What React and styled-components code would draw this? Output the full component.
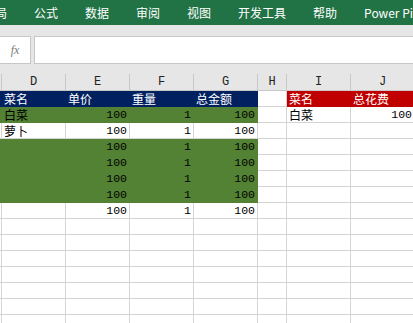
import React from "react";
import styled, { createGlobalStyle } from "styled-components";

const Global = createGlobalStyle`
  html, body { margin: 0; padding: 0; background: #ffffff; }
  body { width: 413px; height: 323px; overflow: hidden; font-family: "Noto Sans CJK SC", sans-serif; }
`;

const Page = styled.div`
  width: 413px;
  height: 323px;
  overflow: hidden;
  display: flex;
  flex-direction: column;
  background: #ffffff;
`;

const Ribbon = styled.div`
  height: 25px;
  flex: none;
  background: #217346;
  display: flex;
  align-items: center;
  gap: 27px;
  overflow: hidden;
  white-space: nowrap;
`;

const Tab = styled.span`
  color: #ffffff;
  font-family: "Noto Sans CJK SC", "Noto Sans", sans-serif;
  font-size: 12px;
  line-height: 25px;
  margin-left: ${(p) => (p.$first ? "-17px" : "0")};
  flex: none;
`;

const FormulaArea = styled.div`
  flex: none;
  background: #e6e6e6;
  padding: 11px 0 10px 0;
  display: flex;
  gap: 3px;
`;

const FxBox = styled.div`
  width: 31px;
  height: 28px;
  box-sizing: border-box;
  background: #ffffff;
  border: 1px solid #c6c6c6;
  border-left: none;
  display: flex;
  align-items: center;
  justify-content: center;
  font-family: "Liberation Serif", serif;
  font-style: italic;
  font-size: 12px;
  color: #7a7a7a;
`;

const InputBox = styled.div`
  flex: 1;
  height: 28px;
  box-sizing: border-box;
  background: #ffffff;
  border: 1px solid #c6c6c6;
  border-right: none;
`;

const ColumnsTemplate = "2px 64px 64px 64px 64px 29px 64px 64px";

const HeaderRow = styled.div`
  flex: none;
  display: grid;
  grid-template-columns: ${ColumnsTemplate};
  height: 16px;
  background: #e6e6e6;
  border-bottom: 1px solid #c8c8c8;
`;

const ColHead = styled.div`
  border-right: 1px solid #c8c8c8;
  font-family: "Liberation Mono", monospace;
  font-size: 12px;
  line-height: 16px;
  text-align: center;
  color: #222222;
`;

const Row = styled.div`
  display: grid;
  grid-template-columns: ${ColumnsTemplate};
  height: 16px;
  flex: none;
`;

const fills = {
  navy: "#002060",
  green: "#548235",
  red: "#c00000",
};

const Cell = styled.div`
  box-sizing: border-box;
  background: ${(p) => (p.$fill ? fills[p.$fill] : "#ffffff")};
  border-right: 1px solid ${(p) => (p.$fill ? fills[p.$fill] : "#d4d4d4")};
  border-bottom: 1px solid ${(p) => (p.$fill ? fills[p.$fill] : "#d4d4d4")};
  color: ${(p) => (p.$fill === "navy" || p.$fill === "red" ? "#ffffff" : "#000000")};
  font-family: ${(p) =>
    p.$num ? '"Liberation Mono", monospace' : '"Noto Sans CJK SC", sans-serif'};
  font-size: ${(p) => (p.$num ? "11.5px" : "12px")};
  line-height: 16px;
  text-align: ${(p) => (p.$num ? "right" : "left")};
  padding: ${(p) => (p.$num ? "0 2px 0 0" : "0 0 0 2px")};
  white-space: nowrap;
  overflow: hidden;
`;

const Stub = styled.div`
  border-right: 1px solid ${(p) => (p.$fill ? fills[p.$fill] : "#d4d4d4")};
  border-bottom: 1px solid ${(p) => (p.$fill ? fills[p.$fill] : "#d4d4d4")};
  box-sizing: border-box;
  background: ${(p) => (p.$fill ? fills[p.$fill] : "#ffffff")};
`;

const rows = [
  {
    stub: "navy",
    cells: [
      { t: "菜名", f: "navy" },
      { t: "单价", f: "navy" },
      { t: "重量", f: "navy" },
      { t: "总金额", f: "navy" },
      { t: "" },
      { t: "菜名", f: "red" },
      { t: "总花费", f: "red" },
    ],
  },
  {
    stub: "green",
    cells: [
      { t: "白菜", f: "green" },
      { t: "100", f: "green", n: true },
      { t: "1", f: "green", n: true },
      { t: "100", f: "green", n: true },
      { t: "" },
      { t: "白菜" },
      { t: "100", n: true },
    ],
  },
  {
    cells: [
      { t: "萝卜" },
      { t: "100", n: true },
      { t: "1", n: true },
      { t: "100", n: true },
      { t: "" },
      { t: "" },
      { t: "" },
    ],
  },
];

const greenRow = {
  stub: "green",
  cells: [
    { t: "", f: "green" },
    { t: "100", f: "green", n: true },
    { t: "1", f: "green", n: true },
    { t: "100", f: "green", n: true },
    { t: "" },
    { t: "" },
    { t: "" },
  ],
};
for (let i = 0; i < 4; i++) rows.push(greenRow);
rows.push({
  cells: [
    { t: "" },
    { t: "100", n: true },
    { t: "1", n: true },
    { t: "100", n: true },
    { t: "" },
    { t: "" },
    { t: "" },
  ],
});
for (let i = 0; i < 8; i++) {
  rows.push({ cells: Array.from({ length: 7 }, () => ({ t: "" })) });
}

const tabs = ["布局", "公式", "数据", "审阅", "视图", "开发工具", "帮助", "Power Pivot"];
const cols = ["D", "E", "F", "G", "H", "I", "J"];

export default function App() {
  return (
    <Page>
      <Global />
      <Ribbon>
        {tabs.map((t, i) => (
          <Tab key={i} $first={i === 0}>
            {t}
          </Tab>
        ))}
      </Ribbon>
      <FormulaArea>
        <FxBox>fx</FxBox>
        <InputBox />
      </FormulaArea>
      <HeaderRow>
        <ColHead />
        {cols.map((c) => (
          <ColHead key={c}>{c}</ColHead>
        ))}
      </HeaderRow>
      {rows.map((r, ri) => (
        <Row key={ri}>
          <Stub $fill={r.stub} />
          {r.cells.map((c, ci) => (
            <Cell key={ci} $fill={c.f} $num={c.n}>
              {c.t}
            </Cell>
          ))}
        </Row>
      ))}
    </Page>
  );
}
